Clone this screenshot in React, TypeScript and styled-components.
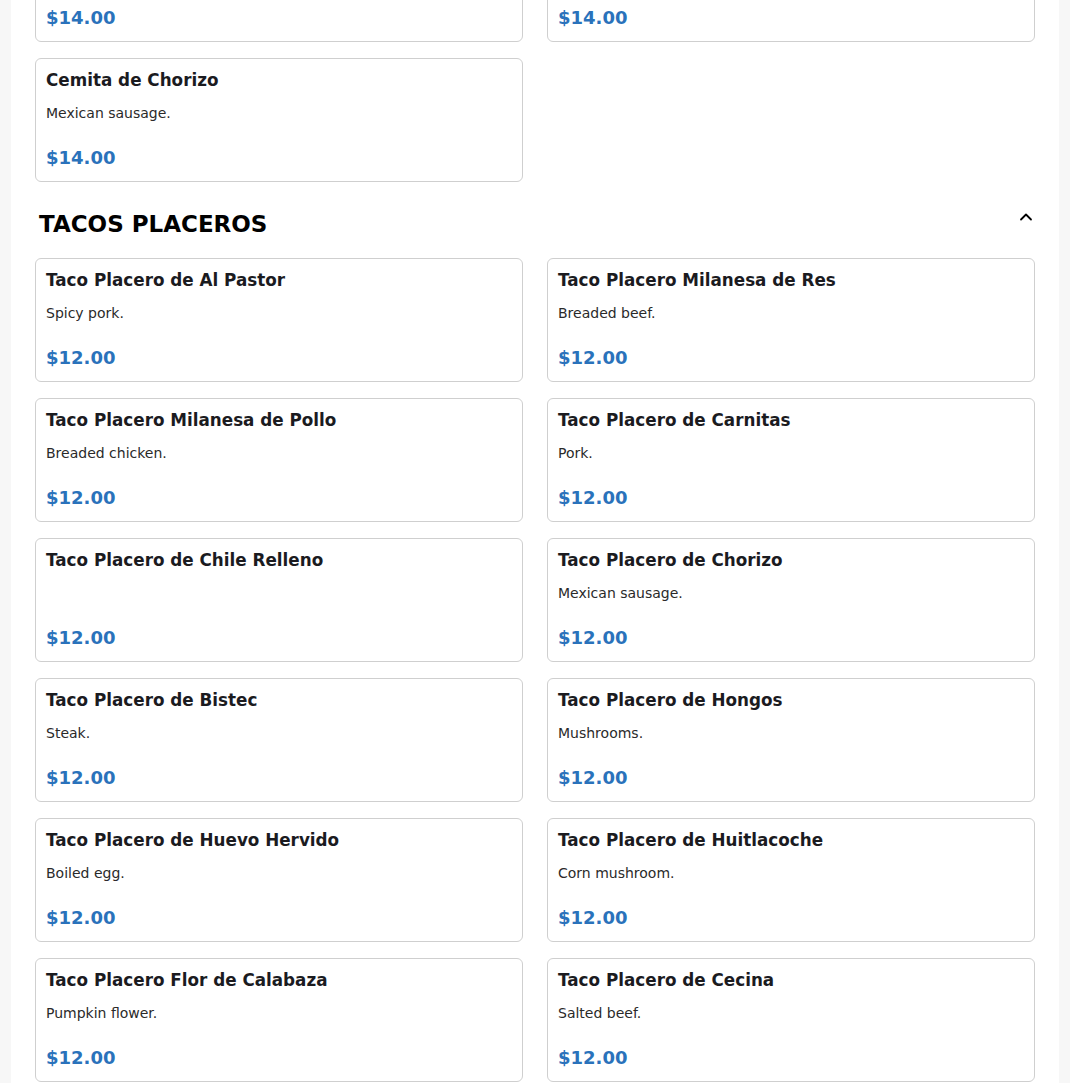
import React, { useLayoutEffect, useRef } from "react";
import styled, { createGlobalStyle } from "styled-components";

const Global = createGlobalStyle`
  html, body { margin: 0; padding: 0; background: #f7f7f7; }
  body { font-family: "DejaVu Sans", Verdana, sans-serif; color: #1b1b1f; }
  * { box-sizing: border-box; }
`;

const Page = styled.main`
  max-width: 1048px;
  margin: 0 auto;
  background: #ffffff;
  padding: 24px 24px 400px;
`;

const Section = styled.section`
  & + & { margin-top: 27px; }
`;

const SectionHeader = styled.header`
  display: flex;
  align-items: flex-start;
  justify-content: space-between;
  padding: 0 1px 0 4px;
  margin-bottom: 19px;
`;

const SectionTitle = styled.h2`
  margin: 0;
  font-size: 23px;
  line-height: 30px;
  font-weight: 700;
  color: #000;
`;

const Toggle = styled.button`
  border: 0;
  background: none;
  padding: 0;
  margin-top: 0;
  width: 16px;
  height: 16px;
  display: flex;
  align-items: center;
  justify-content: center;
  cursor: pointer;
`;

const Grid = styled.div`
  display: grid;
  grid-template-columns: 1fr 1fr;
  column-gap: 24px;
  row-gap: 16px;
`;

const Card = styled.article`
  border: 1px solid #cfcfcf;
  border-radius: 6px;
  padding: 10px 10px 12px;
  min-height: 124px;
  display: flex;
  flex-direction: column;
  background: #fff;
`;

const ItemName = styled.h3`
  margin: 0;
  font-size: 16.8px;
  line-height: 22px;
  font-weight: 700;
  color: #1b1b1f;
`;

const ItemDesc = styled.p`
  margin: 13px 0 0;
  font-size: 14px;
  line-height: 18px;
  color: #2a2a2a;
  min-height: 18px;
`;

const Price = styled.div`
  margin-top: auto;
  font-size: 18px;
  line-height: 22px;
  font-weight: 700;
  color: #2a72bb;
`;

type Item = { name: string; desc: string; price: string };

const cemitas: Item[] = [
  { name: "Cemita de Milanesa de Res", desc: "Breaded beef.", price: "$14.00" },
  { name: "Cemita de Milanesa de Pollo", desc: "Breaded chicken.", price: "$14.00" },
  { name: "Cemita de Carnitas", desc: "Pork.", price: "$14.00" },
  { name: "Cemita de Al Pastor", desc: "Spicy pork.", price: "$14.00" },
  { name: "Cemita de Chorizo", desc: "Mexican sausage.", price: "$14.00" },
];

const tacos: Item[] = [
  { name: "Taco Placero de Al Pastor", desc: "Spicy pork.", price: "$12.00" },
  { name: "Taco Placero Milanesa de Res", desc: "Breaded beef.", price: "$12.00" },
  { name: "Taco Placero Milanesa de Pollo", desc: "Breaded chicken.", price: "$12.00" },
  { name: "Taco Placero de Carnitas", desc: "Pork.", price: "$12.00" },
  { name: "Taco Placero de Chile Relleno", desc: "", price: "$12.00" },
  { name: "Taco Placero de Chorizo", desc: "Mexican sausage.", price: "$12.00" },
  { name: "Taco Placero de Bistec", desc: "Steak.", price: "$12.00" },
  { name: "Taco Placero de Hongos", desc: "Mushrooms.", price: "$12.00" },
  { name: "Taco Placero de Huevo Hervido", desc: "Boiled egg.", price: "$12.00" },
  { name: "Taco Placero de Huitlacoche", desc: "Corn mushroom.", price: "$12.00" },
  { name: "Taco Placero Flor de Calabaza", desc: "Pumpkin flower.", price: "$12.00" },
  { name: "Taco Placero de Cecina", desc: "Salted beef.", price: "$12.00" },
];

const Chevron = () => (
  <svg width="14" height="14" viewBox="0 0 14 14" fill="none">
    <path d="M2 9.5 L7 4.5 L12 9.5" stroke="#000" strokeWidth="1.8" strokeLinecap="round" strokeLinejoin="round" />
  </svg>
);

const MenuSection = ({
  title,
  items,
  anchorIndex,
  anchorRef,
}: {
  title: string;
  items: Item[];
  anchorIndex?: number;
  anchorRef?: React.RefObject<HTMLElement | null>;
}) => (
  <Section>
    <SectionHeader>
      <SectionTitle>{title}</SectionTitle>
      <Toggle aria-label="Collapse">
        <Chevron />
      </Toggle>
    </SectionHeader>
    <Grid>
      {items.map((it, i) => (
        <Card key={it.name} ref={i === anchorIndex ? (anchorRef as React.RefObject<HTMLElement>) : undefined}>
          <ItemName>{it.name}</ItemName>
          <ItemDesc>{it.desc}</ItemDesc>
          <Price>{it.price}</Price>
        </Card>
      ))}
    </Grid>
  </Section>
);

export default function App() {
  const anchor = useRef<HTMLElement | null>(null);
  useLayoutEffect(() => {
    const el = anchor.current;
    if (el) {
      const top = el.getBoundingClientRect().top + window.scrollY;
      window.scrollTo(0, top - 58);
    }
  }, []);
  return (
    <>
      <Global />
      <Page>
        <MenuSection title="CEMITAS" items={cemitas} anchorIndex={4} anchorRef={anchor} />
        <MenuSection title="TACOS PLACEROS" items={tacos} />
      </Page>
    </>
  );
}
